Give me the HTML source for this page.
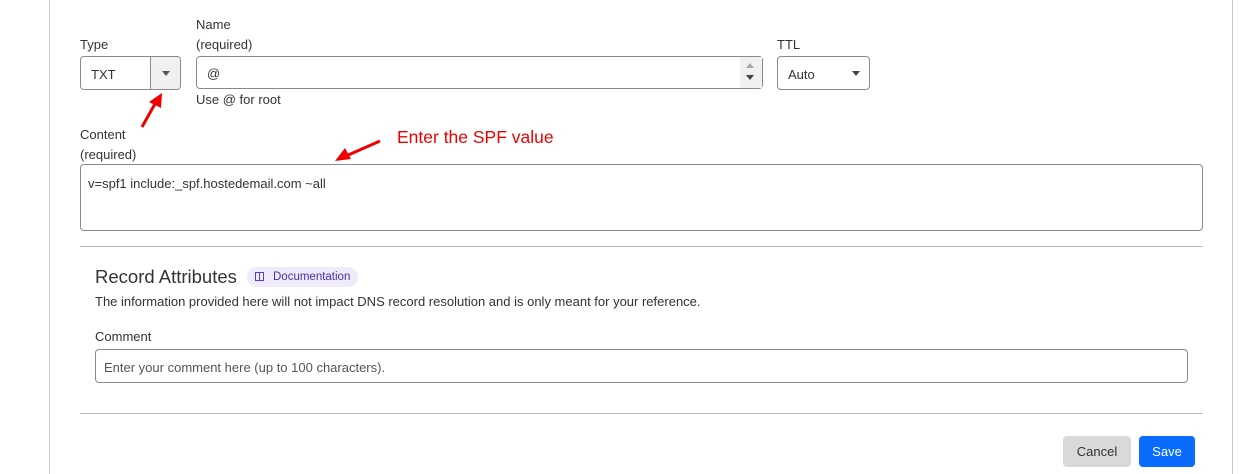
<!DOCTYPE html>
<html><head><style>
body{margin:0;width:1253px;height:474px;background:#fff;font-family:"Liberation Sans",sans-serif;color:#333;position:relative;overflow:hidden}
.a{position:absolute}
.t{font-size:13px;color:#333}
.box{position:absolute;border:1px solid #8a8a8a;border-radius:4px;background:#fff;box-sizing:border-box}
</style></head><body>
<div class="a" style="left:49px;top:0;width:1px;height:474px;background:#c8c8c8"></div>
<div class="a" style="left:1232px;top:0;width:1px;height:474px;background:#c8c8c8"></div>

<div class="a t" style="left:80px;top:37px">Type</div>
<div class="a t" style="left:196px;top:17px">Name</div>
<div class="a t" style="left:196px;top:37px">(required)</div>
<div class="a t" style="left:777px;top:37px">TTL</div>

<div class="box" style="left:80px;top:56px;width:101px;height:34px;overflow:hidden">
 <div class="a t" style="left:10px;top:10px">TXT</div>
 <div class="a" style="left:69px;top:0;width:31px;height:32px;background:#f0f0f0;border-left:1px solid #8a8a8a"></div>
 <div class="a" style="left:81px;top:14px;width:0;height:0;border-left:4px solid transparent;border-right:4px solid transparent;border-top:5px solid #555"></div>
</div>
<div class="box" style="left:196px;top:56px;width:567px;height:33px">
 <div class="a t" style="left:10px;top:9px">@</div>
 <div class="a" style="left:543px;top:0;width:22px;height:31px;background:#f0f0f0"></div>
 <div class="a" style="left:549px;top:6px;border-left:4px solid transparent;border-right:4px solid transparent;border-bottom:5px solid #aaa"></div>
 <div class="a" style="left:549px;top:18px;border-left:4px solid transparent;border-right:4px solid transparent;border-top:5px solid #444"></div>
</div>
<div class="a t" style="left:196px;top:92px">Use @ for root</div>
<div class="box" style="left:777px;top:56px;width:93px;height:34px">
 <div class="a t" style="left:10px;top:10px">Auto</div>
 <div class="a" style="left:74px;top:14px;border-left:4px solid transparent;border-right:4px solid transparent;border-top:5px solid #444"></div>
</div>

<svg class="a" style="left:135px;top:88px" width="40" height="45"><line x1="7" y1="39" x2="21" y2="14" stroke="#e00" stroke-width="3"/><polygon points="27,5 14,14 26,20" fill="#e00"/></svg>
<svg class="a" style="left:330px;top:136px" width="60" height="30"><line x1="50" y1="5" x2="16" y2="20" stroke="#e00" stroke-width="3"/><polygon points="5,25 15,12 21,23" fill="#e00"/></svg>
<div class="a" style="left:397px;top:127px;font-size:17.5px;color:#e00">Enter the SPF value</div>

<div class="a t" style="left:80px;top:127px">Content</div>
<div class="a t" style="left:80px;top:147px">(required)</div>
<div class="box" style="left:80px;top:164px;width:1123px;height:67px">
 <div class="a t" style="left:7px;top:11px">v=spf1 include:_spf.hostedemail.com ~all</div>
</div>
<div class="a" style="left:80px;top:246px;width:1123px;height:1px;background:#bbb"></div>

<div class="a" style="left:95px;top:266px;font-size:18.5px;color:#333">Record Attributes</div>
<div class="a" style="left:247px;top:267px;width:111px;height:20px;border-radius:10px;background:#efebfb"></div>
<svg class="a" style="left:255px;top:272px" width="10" height="10"><rect x="0.5" y="0.5" width="8" height="8" fill="none" stroke="#5b3cc4"/><line x1="4.5" y1="0" x2="4.5" y2="9" stroke="#5b3cc4"/></svg>
<div class="a" style="left:273px;top:271px;font-size:11.5px;color:#4a2fa8">Documentation</div>
<div class="a t" style="left:95px;top:294px">The information provided here will not impact DNS record resolution and is only meant for your reference.</div>
<div class="a t" style="left:95px;top:329px">Comment</div>
<div class="box" style="left:95px;top:349px;width:1093px;height:34px">
 <div class="a t" style="left:8px;top:10px;color:#555">Enter your comment here (up to 100 characters).</div>
</div>
<div class="a" style="left:80px;top:413px;width:1123px;height:1px;background:#bbb"></div>

<div class="a" style="left:1063px;top:436px;width:68px;height:31px;border-radius:4px;background:#d9d9d9;font-size:13px;color:#333;text-align:center;line-height:32px">Cancel</div>
<div class="a" style="left:1139px;top:436px;width:56px;height:31px;border-radius:4px;background:#0a6cff;font-size:13px;color:#fff;text-align:center;line-height:32px">Save</div>
</body></html>
